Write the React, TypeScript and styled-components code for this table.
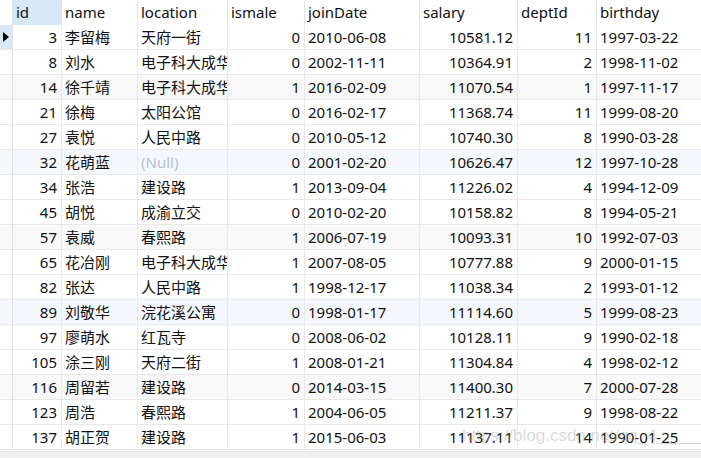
import React from "react";
import styled, { createGlobalStyle } from "styled-components";

const Global = createGlobalStyle`
  html, body { margin: 0; padding: 0; background: #ffffff; }
  body { font-family: "Noto Sans", "Noto Sans CJK SC", sans-serif; }
`;

type Row = [number, string, string | null, number, string, string, number, string];

const rows: Row[] = [
  [3, "李留梅", "天府一街", 0, "2010-06-08", "10581.12", 11, "1997-03-22"],
  [8, "刘水", "电子科大成华", 0, "2002-11-11", "10364.91", 2, "1998-11-02"],
  [14, "徐千靖", "电子科大成华", 1, "2016-02-09", "11070.54", 1, "1997-11-17"],
  [21, "徐梅", "太阳公馆", 0, "2016-02-17", "11368.74", 11, "1999-08-20"],
  [27, "袁悦", "人民中路", 0, "2010-05-12", "10740.30", 8, "1990-03-28"],
  [32, "花萌蓝", null, 0, "2001-02-20", "10626.47", 12, "1997-10-28"],
  [34, "张浩", "建设路", 1, "2013-09-04", "11226.02", 4, "1994-12-09"],
  [45, "胡悦", "成渝立交", 0, "2010-02-20", "10158.82", 8, "1994-05-21"],
  [57, "袁威", "春熙路", 1, "2006-07-19", "10093.31", 10, "1992-07-03"],
  [65, "花冶刚", "电子科大成华", 1, "2007-08-05", "10777.88", 9, "2000-01-15"],
  [82, "张达", "人民中路", 1, "1998-12-17", "11038.34", 2, "1993-01-12"],
  [89, "刘敬华", "浣花溪公寓", 0, "1998-01-17", "11114.60", 5, "1999-08-23"],
  [97, "廖萌水", "红瓦寺", 0, "2008-06-02", "10128.11", 9, "1990-02-18"],
  [105, "涂三刚", "天府二街", 1, "2008-01-21", "11304.84", 4, "1998-02-12"],
  [116, "周留若", "建设路", 0, "2014-03-15", "11400.30", 7, "2000-07-28"],
  [123, "周浩", "春熙路", 1, "2004-06-05", "11211.37", 9, "1998-08-22"],
  [137, "胡正贺", "建设路", 1, "2015-06-03", "11137.11", 14, "1990-01-25"],
];

const headers = ["id", "name", "location", "ismale", "joinDate", "salary", "deptId", "birthday"];
const rightAligned = [true, false, false, true, false, true, true, false];

const Page = styled.div`
  position: relative;
  width: 701px;
  height: 458px;
  overflow: hidden;
  background: #ffffff;
`;

const Grid = styled.div`
  display: grid;
  grid-template-columns: 13px 49px 76px 90px 77px 115px 98px 79px 120px;
  grid-auto-rows: 25px;
  width: 717px;
`;

const HeadCell = styled.div<{ $active?: boolean }>`
  height: 26px;
  box-sizing: border-box;
  border-right: 1px solid #e3e3e3;
  border-bottom: 1px solid #e3e3e3;
  background: ${(p) => (p.$active ? "#d9e8f6" : "#ffffff")};
  padding: 0 3px;
  font-size: 15px;
  line-height: 24px;
  color: #101010;
  white-space: nowrap;
  overflow: hidden;
`;

const Indicator = styled.div<{ $current?: boolean; $bg: string }>`
  position: relative;
  box-sizing: border-box;
  border-right: 1px solid #e3e3e3;
  border-bottom: 1px solid #e8e8e8;
  background: ${(p) => (p.$current ? "#d9e8f6" : p.$bg)};
`;

const Arrow = styled.span`
  position: absolute;
  left: 3px;
  top: 7px;
  width: 0;
  height: 0;
  border-top: 5px solid transparent;
  border-bottom: 5px solid transparent;
  border-left: 6px solid #000000;
`;

const Cell = styled.div<{ $right?: boolean; $bg: string }>`
  box-sizing: border-box;
  border-right: 1px solid #e8e8e8;
  border-bottom: 1px solid #e8e8e8;
  background: ${(p) => p.$bg};
  padding: 0 4px 0 3px;
  text-align: ${(p) => (p.$right ? "right" : "left")};
  font-size: 15px;
  line-height: 24px;
  color: #111111;
  white-space: nowrap;
  overflow: hidden;
`;

const Null = styled.span`
  color: #b9c0d0;
`;

const Scrollbar = styled.div`
  height: 7px;
  margin-top: 1px;
  background: #f0f0f0;
  border-top: 1px solid #e6e6e6;
`;

const Watermark = styled.div`
  position: absolute;
  left: 462px;
  top: 426px;
  font-family: "Liberation Sans", Arial, sans-serif;
  font-size: 17px;
  color: rgba(170, 170, 170, 0.45);
  white-space: nowrap;
  pointer-events: none;
`;

function rowBg(i: number): string {
  if (i % 6 === 2) return "#f8f8f8";
  if (i % 6 === 5) return "#f4f8fc";
  return "#ffffff";
}

export default function App() {
  return (
    <Page>
      <Global />
      <Grid>
        <HeadCell />
        {headers.map((h, i) => (
          <HeadCell key={h} $active={i === 0}>
            {h}
          </HeadCell>
        ))}
        {rows.map((r, ri) => {
          const bg = rowBg(ri);
          return (
            <React.Fragment key={r[0]}>
              <Indicator $current={ri === 0} $bg={bg}>
                {ri === 0 && <Arrow />}
              </Indicator>
              {r.map((v, ci) => (
                <Cell key={ci} $right={rightAligned[ci]} $bg={bg}>
                  {v === null ? <Null>(Null)</Null> : v}
                </Cell>
              ))}
            </React.Fragment>
          );
        })}
      </Grid>
      <Scrollbar />
      <Watermark>https://blog.csdn.net/qq_4_____g</Watermark>
    </Page>
  );
}
